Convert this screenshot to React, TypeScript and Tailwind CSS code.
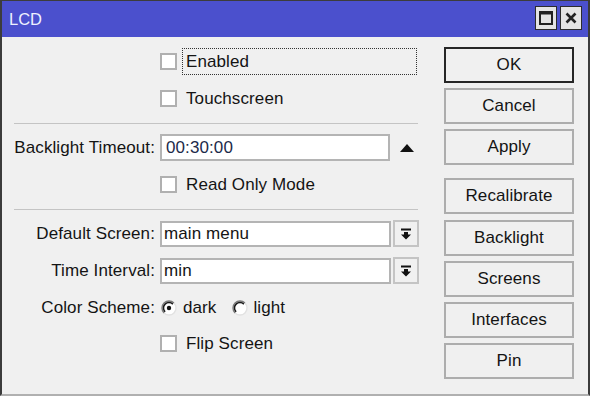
import React from "react";

const font = { fontFamily: '"Liberation Sans", Arial, sans-serif' };

function Checkbox() {
  return <div className="w-[17px] h-[17px] border-2 border-[#b0b0b0] bg-white shrink-0" />;
}

function Radio({ checked }: { checked?: boolean }) {
  return (
    <svg width="16" height="16" viewBox="0 0 16 16" className="shrink-0">
      <circle cx="8" cy="8" r="7" fill="#ffffff" />
      <path d="M12.95 3.05 A7 7 0 0 0 3.05 12.95" fill="none" stroke="#7a7a7a" strokeWidth="1.4" />
      <path d="M11.9 4.1 A5.5 5.5 0 0 0 4.1 11.9" fill="none" stroke="#1a1a1a" strokeWidth="1.5" />
      <path d="M12.95 3.05 A7 7 0 0 1 3.05 12.95" fill="none" stroke="#e2e2e2" strokeWidth="1.4" />
      {checked && <circle cx="8" cy="8" r="2.2" fill="#111" />}
    </svg>
  );
}

function DropIcon() {
  return (
    <svg width="12" height="12" viewBox="0 0 12 12">
      <rect x="1" y="0.5" width="10" height="2" fill="#111" />
      <path d="M4 4 H8 V6.5 H11 L6 11.5 L1 6.5 H4 Z" fill="#111" />
    </svg>
  );
}

function Btn({ label, primary, mt }: { label: string; primary?: boolean; mt: string }) {
  return (
    <div
      className={`${mt} w-[130px] h-[36px] flex items-center justify-center bg-[#f0f0f0] border-2 ${
        primary ? "border-[#262626]" : "border-[#adadad]"
      } text-[17px] tracking-[0.1px] text-[#141414]`}
    >
      {label}
    </div>
  );
}

export default function App() {
  return (
    <div
      style={font}
      className="w-[590px] h-[396px] bg-[#f0f0f0] border-l-2 border-r-2 border-t border-b-2 border-l-[#3c3c3c] border-r-[#3c3c3c] border-t-[#3c3c3c] border-b-[#b0b0b0] flex flex-col overflow-hidden"
    >
      {/* Title bar */}
      <div className="h-[36px] bg-[#4b50cd] flex items-center justify-between pl-[7px] pr-[6px] shrink-0">
        <span className="text-[16.5px] text-[#eef0ff]">LCD</span>
        <div className="flex gap-[3px] mt-[-2px]">
          <div className="w-[22px] h-[24px] bg-[#e4e4e4] border border-[#2c2c2c] flex items-center justify-center">
            <svg width="14" height="14" viewBox="0 0 14 14">
              <rect x="1" y="1" width="12" height="12" fill="none" stroke="#222" strokeWidth="2" />
              <rect x="1" y="1" width="12" height="2.5" fill="#222" />
            </svg>
          </div>
          <div className="w-[22px] h-[24px] bg-[#e4e4e4] border border-[#2c2c2c] flex items-center justify-center">
            <svg width="12" height="12" viewBox="0 0 12 12">
              <path d="M1.5 1.5 L10.5 10.5 M10.5 1.5 L1.5 10.5" stroke="#222" strokeWidth="2.6" />
            </svg>
          </div>
        </div>
      </div>

      {/* Body */}
      <div className="flex flex-1 text-[17px] tracking-[0.1px] text-[#141414]">
        {/* Left form */}
        <div className="w-[420px] flex flex-col">
          {/* Enabled */}
          <div className="mt-[11px] h-[27px] flex items-center pl-[158px]">
            <Checkbox />
            <div className="ml-[5px] w-[235px] h-[27px] border border-dotted border-[#333] flex items-center pl-[3px]">
              Enabled
            </div>
          </div>
          {/* Touchscreen */}
          <div className="mt-[10px] h-[27px] flex items-center pl-[158px]">
            <Checkbox />
            <span className="ml-[9px]">Touchscreen</span>
          </div>
          <div className="mt-[11px] ml-[12px] w-[404px] h-px bg-[#c4c4c4]" />
          {/* Backlight timeout */}
          <div className="mt-[10px] h-[27px] flex items-center">
            <div className="w-[153px] text-right whitespace-nowrap">Backlight Timeout:</div>
            <div className="ml-[5px] w-[230px] h-[27px] bg-white border-2 border-[#b4b4b4] flex items-center pl-[4px] text-[#1c2a4a]">
              00:30:00
            </div>
            <svg width="14" height="8" viewBox="0 0 14 8" className="ml-[10px]">
              <path d="M7 0 L14 8 L0 8 Z" fill="#111" />
            </svg>
          </div>
          {/* Read only */}
          <div className="mt-[10px] h-[27px] flex items-center pl-[158px]">
            <Checkbox />
            <span className="ml-[9px]">Read Only Mode</span>
          </div>
          <div className="mt-[11px] ml-[12px] w-[404px] h-px bg-[#c4c4c4]" />
          {/* Default Screen */}
          <div className="mt-[10px] h-[27px] flex items-center">
            <div className="w-[153px] text-right whitespace-nowrap">Default Screen:</div>
            <div className="ml-[5px] w-[231px] h-[26px] bg-white border-2 border-[#b4b4b4] flex items-center pl-[2px]">
              main menu
            </div>
            <div className="ml-[2px] w-[26px] h-[27px] border-2 border-[#c4c4c4] bg-[#f0f0f0] flex items-center justify-center">
              <DropIcon />
            </div>
          </div>
          {/* Time Interval */}
          <div className="mt-[10px] h-[27px] flex items-center">
            <div className="w-[153px] text-right whitespace-nowrap">Time Interval:</div>
            <div className="ml-[5px] w-[231px] h-[26px] bg-white border-2 border-[#b4b4b4] flex items-center pl-[2px]">
              min
            </div>
            <div className="ml-[2px] w-[26px] h-[27px] border-2 border-[#c4c4c4] bg-[#f0f0f0] flex items-center justify-center">
              <DropIcon />
            </div>
          </div>
          {/* Color Scheme */}
          <div className="mt-[10px] h-[27px] flex items-center">
            <div className="w-[153px] text-right whitespace-nowrap">Color Scheme:</div>
            <div className="ml-[6px] flex items-center">
              <Radio checked />
              <span className="ml-[6px]">dark</span>
              <div className="ml-[16px]">
                <Radio />
              </div>
              <span className="ml-[5px]">light</span>
            </div>
          </div>
          {/* Flip Screen */}
          <div className="mt-[9px] h-[27px] flex items-center pl-[158px]">
            <Checkbox />
            <span className="ml-[9px]">Flip Screen</span>
          </div>
        </div>

        {/* Right buttons */}
        <div className="ml-[22px] flex flex-col">
          <Btn label="OK" primary mt="mt-[10px]" />
          <Btn label="Cancel" mt="mt-[5px]" />
          <Btn label="Apply" mt="mt-[5px]" />
          <Btn label="Recalibrate" mt="mt-[13px]" />
          <Btn label="Backlight" mt="mt-[6px]" />
          <Btn label="Screens" mt="mt-[5px]" />
          <Btn label="Interfaces" mt="mt-[5px]" />
          <Btn label="Pin" mt="mt-[5px]" />
        </div>
      </div>
    </div>
  );
}
